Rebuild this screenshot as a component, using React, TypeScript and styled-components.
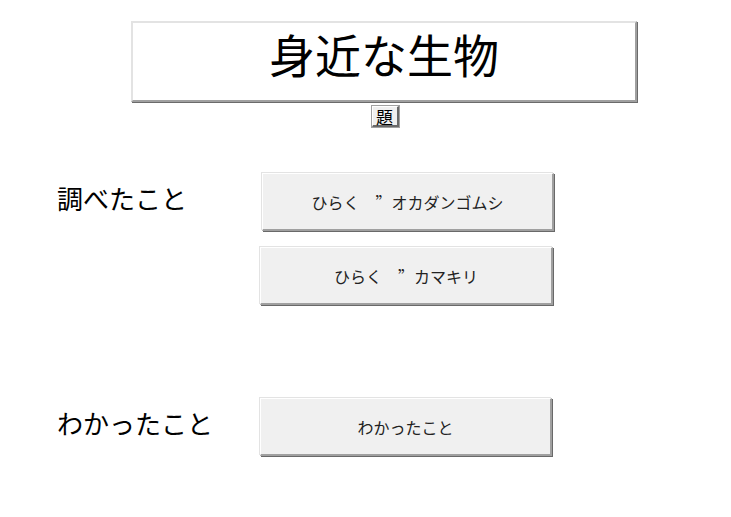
import * as React from 'react';
import styled, { createGlobalStyle } from 'styled-components';

const GlobalStyle = createGlobalStyle`
  html, body {
    margin: 0;
    padding: 0;
    background: #fff;
  }
  body {
    font-family: "MS UI Gothic", "Noto Sans CJK JP", sans-serif;
    color: #000;
  }
`;

const Card = styled.div`
  width: 731px;
  height: 517px;
  padding-top: 21px;
  box-sizing: border-box;
`;

const TitleBox = styled.div`
  margin-left: 131px;
  width: 506px;
  height: 81px;
  box-sizing: border-box;
  border-top: 2px solid #e3e3e3;
  border-left: 2px solid #e3e3e3;
  border-right: 2px solid #a0a0a0;
  border-bottom: 2px solid #a0a0a0;
  box-shadow: 1px 1px 0 #6b6b6b;
  background: #fff;
  display: flex;
  justify-content: center;
  align-items: center;
  padding-bottom: 18px;
  font-size: 46px;
  line-height: 1;
`;

const TitleRow = styled.div`
  display: flex;
  justify-content: center;
  margin-left: 131px;
  width: 506px;
  margin-top: 4px;
  padding-left: 2px;
  box-sizing: border-box;
`;

const SmallButton = styled.button`
  width: 27px;
  height: 21px;
  padding: 0;
  box-sizing: border-box;
  background: #f0f0f0;
  border-top: 1px solid #fff;
  border-left: 1px solid #fff;
  border-right: 2px solid #696969;
  border-bottom: 2px solid #696969;
  outline: 1px solid #a0a0a0;
  font-family: inherit;
  font-size: 17px;
  line-height: 1;
  color: #000;
`;

const Sections = styled.div`
  display: flex;
  flex-direction: column;
  margin-top: 46px;
`;

const Section = styled.div<{ $gap: number }>`
  display: grid;
  grid-template-columns: 203px 1fr;
  padding-left: 57px;
  margin-top: ${(p) => p.$gap}px;
`;

const Label = styled.div`
  font-size: 26px;
  line-height: 58px;
  height: 58px;
  margin-top: -4px;
  white-space: nowrap;
`;

const ButtonStack = styled.div`
  display: flex;
  flex-direction: column;
  gap: 16px;
`;

const CardButton = styled.button<{ $shift?: number; $width?: number }>`
  margin-left: ${(p) => p.$shift ?? 0}px;
  width: ${(p) => p.$width ?? 292}px;
  height: 58px;
  box-sizing: border-box;
  background: #f0f0f0;
  border-top: 1px solid #ffffff;
  border-left: 1px solid #ffffff;
  border-right: 2px solid #a0a0a0;
  border-bottom: 2px solid #a0a0a0;
  box-shadow: 1px 1px 0 #696969, -1px -1px 0 #e3e3e3;
  font-family: inherit;
  font-size: 16px;
  font-feature-settings: "fwid" 1;
  color: #222;
  padding: 0;
  cursor: pointer;
`;

export default function App() {
  return (
    <>
      <GlobalStyle />
      <Card>
        <TitleBox>身近な生物</TitleBox>
        <TitleRow>
          <SmallButton>題</SmallButton>
        </TitleRow>
        <Sections>
          <Section $gap={0}>
            <Label>調べたこと</Label>
            <ButtonStack>
              <CardButton $shift={2}>ひらく　”オカダンゴムシ</CardButton>
              <CardButton $width={293}>ひらく　”カマキリ</CardButton>
            </ButtonStack>
          </Section>
          <Section $gap={93}>
            <Label>わかったこと</Label>
            <ButtonStack>
              <CardButton>わかったこと</CardButton>
            </ButtonStack>
          </Section>
        </Sections>
      </Card>
    </>
  );
}
